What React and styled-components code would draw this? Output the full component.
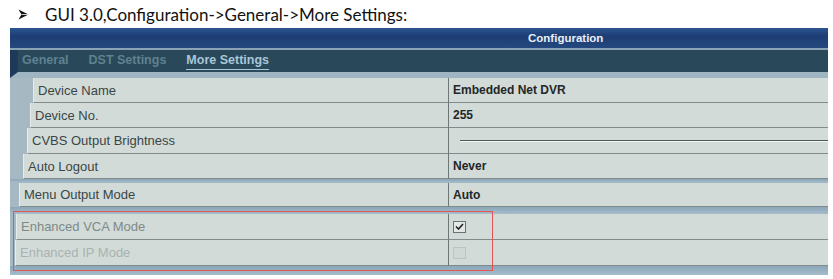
import React from 'react';
import styled, { createGlobalStyle } from 'styled-components';

const COLORS = {
  navy: '#1d3d74',
  navyLight: '#2c5592',
  teal: '#29495a',
  gutter: '#a6b9c3',
  band: '#94afc0',
  row: '#d2dbd8',
  line: '#7f8b8c',
  label: '#3a4646',
  value: '#222727',
};

const GlobalStyle = createGlobalStyle`
  body {
    margin: 0;
    background: #ffffff;
  }
`;

const Page = styled.div`
  width: 833px;
  height: 279px;
  overflow: hidden;
  font-family: 'Liberation Sans', Arial, sans-serif;
`;

const Heading = styled.div`
  height: 28px;
  display: flex;
  align-items: center;
  padding-left: 18px;
  font-family: Lato, 'Open Sans', sans-serif;
  font-size: 17px;
  color: #111;
`;

const Bullet = styled.span`
  display: flex;
  width: 27px;
`;

const Panel = styled.div`
  position: relative;
  margin-left: 10px;
  width: 818px;
  background: ${COLORS.gutter};
`;

const TitleBar = styled.div`
  height: 20px;
  display: flex;
  align-items: center;
  padding-left: 518px;
  background: linear-gradient(${COLORS.navyLight}, ${COLORS.navy} 40%, #24497f);
  color: #e8eef6;
  font-size: 11.5px;
  font-weight: bold;
  border-bottom: 2px solid #8aa4b6;
`;

const TabBar = styled.div`
  height: 22px;
  display: flex;
  align-items: center;
  gap: 20px;
  padding-left: 4px;
  background: ${COLORS.teal};
  border-left: 8px solid #20385a;
  border-bottom: 6px solid #9fb5c1;
`;

const Tab = styled.span`
  font-size: 12.5px;
  font-weight: bold;
  color: ${(p) => (p.active ? '#a9c6d8' : '#5f8190')};
  padding-bottom: 2px;
  border-bottom: 1px solid ${(p) => (p.active ? '#a9c6d8' : 'transparent')};
`;

const Row = styled.div`
  height: ${(p) => p.h}px;
  display: flex;
  padding-left: ${(p) => p.indent}px;
  box-sizing: border-box;
`;

const Label = styled.div`
  flex: 0 0 ${(p) => 439 - p.indent}px;
  box-sizing: border-box;
  display: flex;
  align-items: center;
  padding-left: 4px;
  background: ${COLORS.row};
  border-bottom: 1px solid ${COLORS.line};
  border-left: 1px solid #e6ece9;
  border-right: 1px solid #6d7778;
  font-size: 13px;
  color: ${(p) => p.tone || COLORS.label};
`;

const Value = styled.div`
  flex: 1;
  display: flex;
  align-items: center;
  padding-left: 4px;
  background: ${COLORS.row};
  border-bottom: 1px solid ${COLORS.line};
  font-size: 12px;
  font-weight: bold;
  color: ${COLORS.value};
`;

const Slider = styled.div`
  flex: 1;
  margin-left: 7px;
  height: 1px;
  background: #4e5656;
  border-bottom: 1px solid #f2f5f4;
`;

const Band = styled.div`
  height: ${(p) => p.h}px;
  background: linear-gradient(#8aa6b8, #a6bdca);
`;

const Box = styled.span`
  width: 11px;
  height: 10px;
  border: 1px solid ${(p) => (p.faded ? '#bcc4c1' : '#6a7372')};
  display: flex;
  align-items: center;
  justify-content: center;
  background: ${(p) => (p.faded ? '#d0d8d5' : '#e3e8e6')};
`;

const Highlight = styled.div`
  position: absolute;
  left: 3px;
  top: 183px;
  width: 480px;
  height: 60px;
  box-sizing: border-box;
  border: 1.5px solid #e35555;
  pointer-events: none;
`;

const rows = [
  { label: 'Device Name', value: 'Embedded Net DVR', indent: 23, h: 25 },
  { label: 'Device No.', value: '255', indent: 20, h: 25 },
  { label: 'CVBS Output Brightness', slider: true, indent: 17, h: 26 },
  { label: 'Auto Logout', value: 'Never', indent: 13, h: 25 },
];

const Arrow = () => (
  <svg width="11" height="11" viewBox="0 0 11 11">
    <path d="M0.5 0.5 L10.5 5.5 L0.5 10.5 L3.5 5.5 Z" fill="#111" />
    <path d="M3.5 5.5 L10.5 5.5" stroke="#fff" strokeWidth="0.8" />
  </svg>
);

const Check = () => (
  <svg width="9" height="7" viewBox="0 0 9 7">
    <path d="M1 3.5 L3.5 6 L8 1" fill="none" stroke="#1d2222" strokeWidth="1.6" />
  </svg>
);

const SettingRow = ({ label, value, slider, indent, h, tone, children }) => (
  <Row indent={indent} h={h}>
    <Label indent={indent} tone={tone}>{label}</Label>
    <Value>{slider ? <Slider /> : value}{children}</Value>
  </Row>
);

const App = () => (
  <Page>
    <GlobalStyle />
    <Heading>
      <Bullet>
        <Arrow />
      </Bullet>
      GUI 3.0,Configuration-&gt;General-&gt;More Settings:
    </Heading>
    <Panel>
      <TitleBar>Configuration</TitleBar>
      <TabBar>
        <Tab>General</Tab>
        <Tab>DST Settings</Tab>
        <Tab active>More Settings</Tab>
      </TabBar>
      {rows.map((r) => (
        <SettingRow key={r.label} {...r} />
      ))}
      <Band h={4} />
      <SettingRow label="Menu Output Mode" value="Auto" indent={9} h={24} />
      <Band h={7} />
      <SettingRow label="Enhanced VCA Mode" indent={6} h={26} tone="#7e8a89">
        <Box>
          <Check />
        </Box>
      </SettingRow>
      <SettingRow label="Enhanced IP Mode" indent={5} h={26} tone="#a9b2b0">
        <Box faded />
      </SettingRow>
      <Band h={9} />
      <Highlight />
    </Panel>
  </Page>
);

export default App;
